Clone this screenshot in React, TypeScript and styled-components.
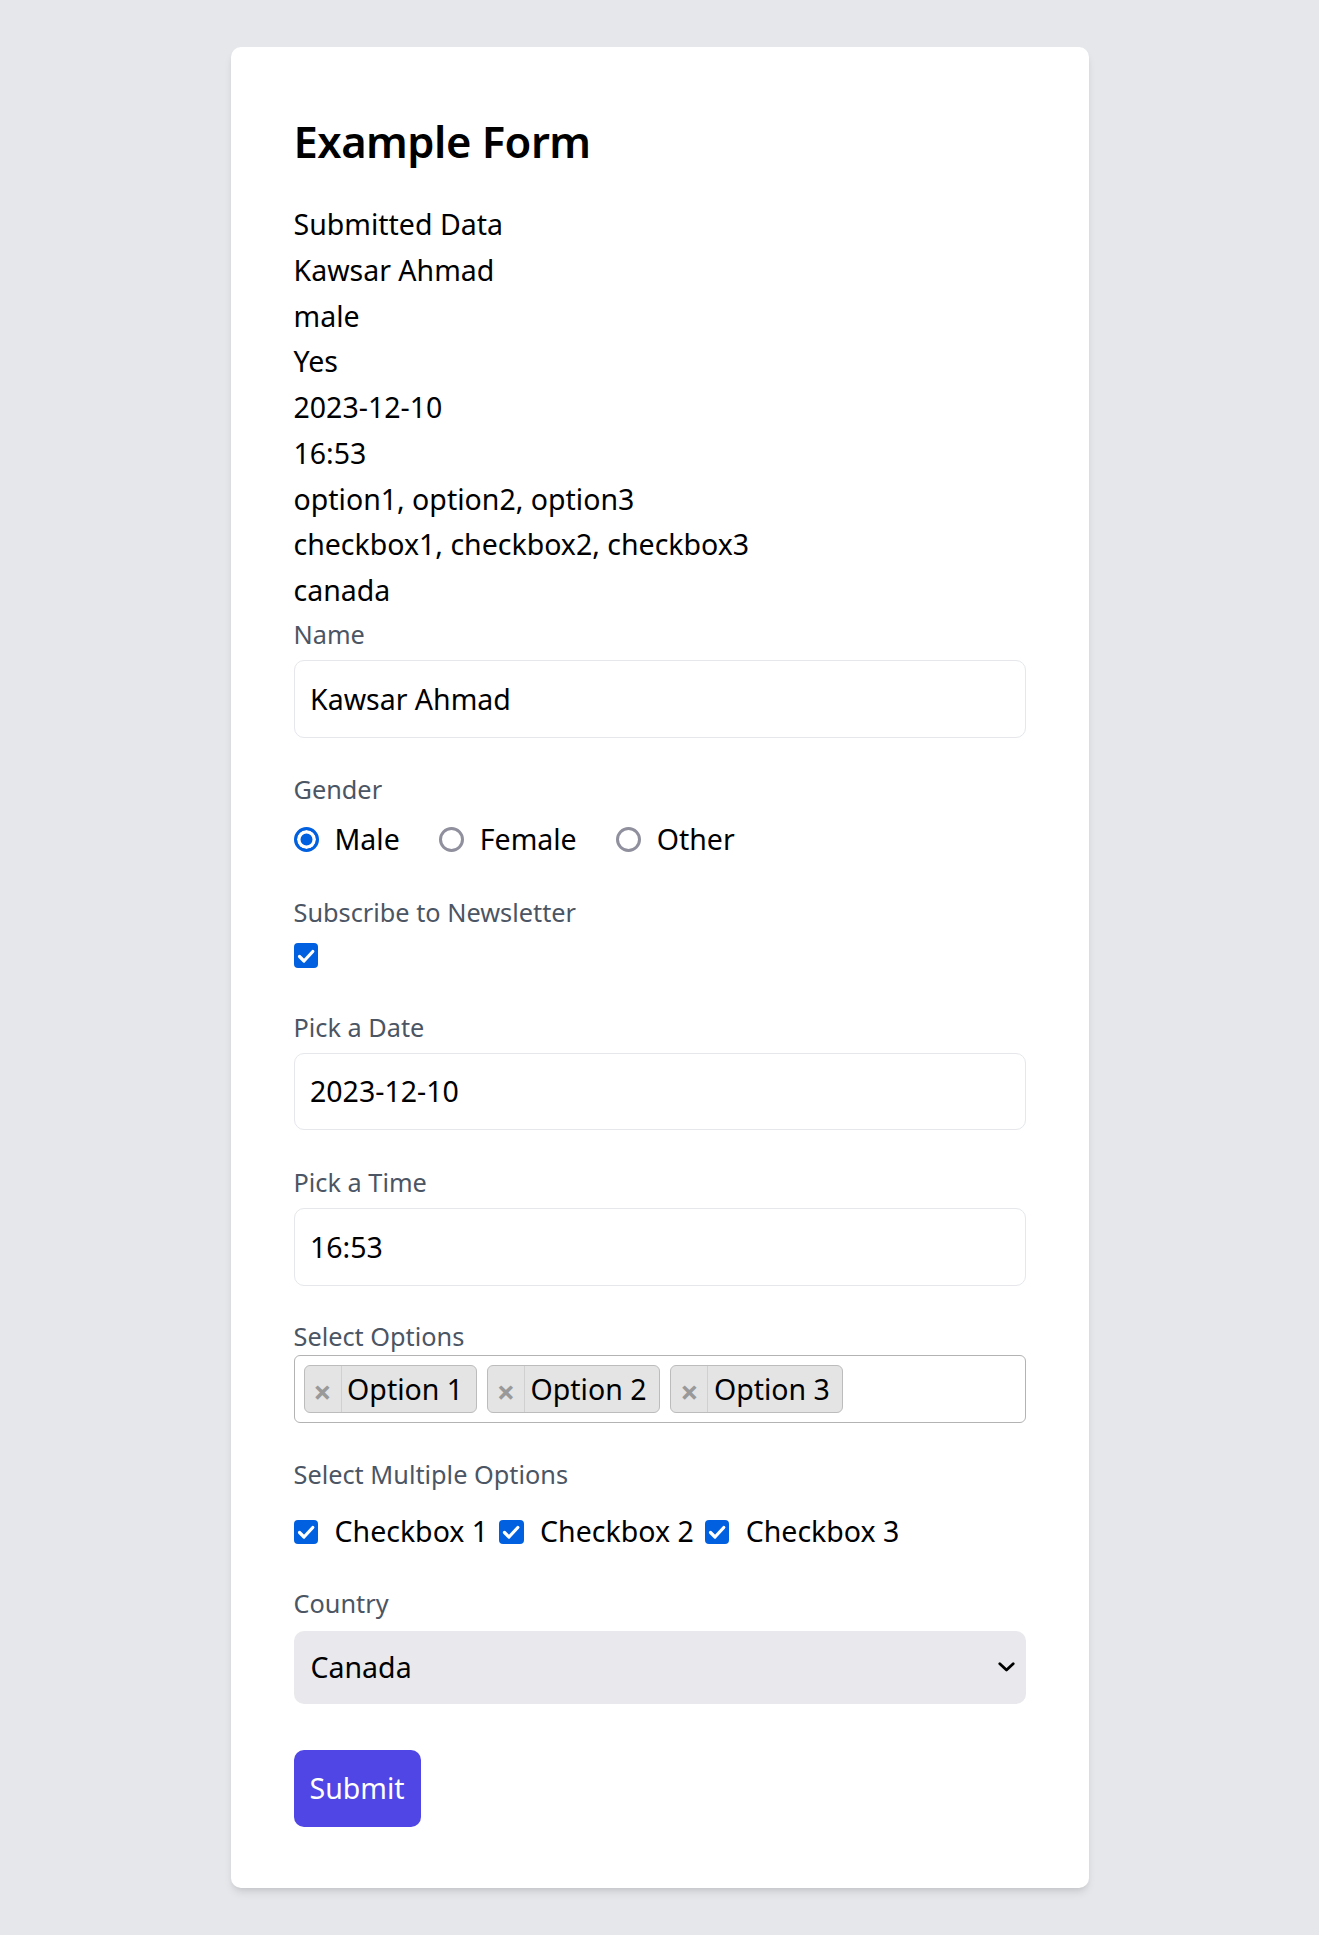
import React from "react"
import styled, { createGlobalStyle, css } from "styled-components"

const GlobalStyle = createGlobalStyle`
  html, body {
    margin: 0;
    padding: 0;
    background: #ffffff;
  }
  body {
    font-family: "Noto Sans", "Open Sans", sans-serif;
    color: #000000;
  }
  *, *::before, *::after {
    box-sizing: border-box;
  }
`

const Page = styled.div`
  width: 1319px;
  padding: 47px 0;
  background: #e5e7eb;
`

const Card = styled.div`
  width: 858px;
  margin: 0 auto;
  padding: 65px 63px 61px;
  background: #ffffff;
  border-radius: 10px;
  box-shadow: 0 6px 10px -2px rgba(0, 0, 0, 0.1), 0 3px 6px -3px rgba(0, 0, 0, 0.1);
`

const Title = styled.h1`
  margin: 0 0 31px;
  font-size: 43.5px;
  line-height: 58px;
  font-weight: 600;
  letter-spacing: -0.5px;
`

const DataList = styled.div`
  margin-bottom: 2px;
`

const DataLine = styled.p`
  margin: 0;
  font-size: 28.5px;
  line-height: 45.75px;
  padding-top: 1px;
  margin-bottom: -1px;
`

const Field = styled.div<{ $after?: number }>`
  margin-bottom: ${(p) => p.$after ?? 32.5}px;
`

const Label = styled.label<{ $space?: number }>`
  display: block;
  margin-bottom: ${(p) => p.$space ?? 6.5}px;
  font-size: 25.3px;
  line-height: 39px;
  color: #4b5563;
`

const TextInput = styled.input`
  display: block;
  width: 100%;
  height: 77.6px;
  padding: 0 15.5px;
  border: 1.5px solid #e5e7eb;
  border-radius: 10px;
  background: #ffffff;
  font-family: inherit;
  font-size: 28.5px;
  color: #000000;
  outline: none;
`

const OptionRow = styled.div`
  display: flex;
  align-items: center;
  height: 45.75px;
`

const RadioOption = styled.label`
  display: flex;
  align-items: center;
  margin-right: 39px;
  font-size: 28.5px;
  line-height: 45.75px;
`

const RadioMark = styled.span<{ $checked?: boolean }>`
  width: 25px;
  height: 25px;
  margin-right: 16px;
  border-radius: 50%;
  border: 3px solid #8f8f9d;
  background: #ffffff;
  ${(p) =>
    p.$checked &&
    css`
      border-color: #0060df;
      background: #0060df;
      box-shadow: inset 0 0 0 3.5px #ffffff;
    `}
`

const CheckMark = styled.span`
  display: flex;
  align-items: center;
  justify-content: center;
  width: 24.5px;
  height: 24.5px;
  border-radius: 4px;
  background: #0060df;
  flex-shrink: 0;
`

const CheckBlock = styled.div`
  height: 37px;
  padding-top: 5px;
`

const CheckOption = styled.label`
  display: flex;
  align-items: center;
  margin-right: 11px;
  font-size: 28.5px;
  line-height: 45.75px;

  ${CheckMark} {
    margin-right: 16.5px;
  }
`

const MultiBox = styled.div`
  display: flex;
  align-items: center;
  gap: 10.3px;
  height: 67.6px;
  padding: 0 9px;
  border: 1.5px solid #b3b3b3;
  border-radius: 6px;
  background: #ffffff;
`

const Chip = styled.span`
  display: flex;
  align-items: stretch;
  height: 47.3px;
  border: 1.3px solid #bcbcbc;
  border-radius: 6px;
  background: #e4e4e4;
`

const ChipRemove = styled.span`
  display: flex;
  align-items: center;
  justify-content: center;
  width: 37px;
  padding-top: 4px;
  border-right: 1.3px solid #d0d0d0;
  color: #999999;
  font-size: 32px;
  font-weight: 700;
`

const ChipText = styled.span`
  display: flex;
  align-items: center;
  padding: 0 12.5px 0 5.6px;
  font-size: 28.5px;
`

const SelectWrap = styled.div`
  position: relative;
`

const Select = styled.select`
  display: block;
  width: 100%;
  height: 73px;
  padding: 0 17px;
  border: none;
  border-radius: 10px;
  background: #e9e9ed;
  font-family: inherit;
  font-size: 28.5px;
  color: #000000;
  appearance: none;
  outline: none;
`

const Chevron = styled.svg`
  position: absolute;
  right: 10.3px;
  top: 50%;
  transform: translateY(-50%);
  pointer-events: none;
`

const SubmitButton = styled.button`
  display: block;
  height: 77px;
  padding: 0 16px;
  border: none;
  border-radius: 10px;
  background: #4f46e5;
  color: #ffffff;
  font-family: inherit;
  font-size: 28.5px;
  cursor: pointer;
`

const Check = () => (
  <CheckMark>
    <svg width="24" height="24" viewBox="0 0 24 24" fill="none">
      <polyline
        points="5.5,12.5 10,17 18.8,7.5"
        stroke="#ffffff"
        strokeWidth="3.2"
        strokeLinecap="round"
        strokeLinejoin="round"
      />
    </svg>
  </CheckMark>
)

const submitted = [
  "Submitted Data",
  "Kawsar Ahmad",
  "male",
  "Yes",
  "2023-12-10",
  "16:53",
  "option1, option2, option3",
  "checkbox1, checkbox2, checkbox3",
  "canada",
]

const genders = [
  { label: "Male", checked: true },
  { label: "Female", checked: false },
  { label: "Other", checked: false },
]

const App = () => {
  return (
    <Page>
      <GlobalStyle />
      <Card>
        <Title>Example Form</Title>
        <DataList>
          {submitted.map((line) => (
            <DataLine key={line}>{line}</DataLine>
          ))}
        </DataList>
        <form onSubmit={(e) => e.preventDefault()}>
          <Field>
            <Label>Name</Label>
            <TextInput type="text" defaultValue="Kawsar Ahmad" />
          </Field>
          <Field $after={30.6}>
            <Label $space={7.3}>Gender</Label>
            <OptionRow>
              {genders.map((g) => (
                <RadioOption key={g.label}>
                  <RadioMark $checked={g.checked} />
                  {g.label}
                </RadioOption>
              ))}
            </OptionRow>
          </Field>
          <Field>
            <Label>Subscribe to Newsletter</Label>
            <CheckBlock>
              <Check />
            </CheckBlock>
          </Field>
          <Field $after={32.4}>
            <Label $space={5.6}>Pick a Date</Label>
            <TextInput type="text" defaultValue="2023-12-10" />
          </Field>
          <Field $after={31.7}>
            <Label>Pick a Time</Label>
            <TextInput type="text" defaultValue="16:53" />
          </Field>
          <Field $after={31.7}>
            <Label $space={-1}>Select Options</Label>
            <MultiBox>
              {["Option 1", "Option 2", "Option 3"].map((o) => (
                <Chip key={o}>
                  <ChipRemove>×</ChipRemove>
                  <ChipText>{o}</ChipText>
                </Chip>
              ))}
            </MultiBox>
          </Field>
          <Field $after={29}>
            <Label $space={15.3}>Select Multiple Options</Label>
            <OptionRow>
              {["Checkbox 1", "Checkbox 2", "Checkbox 3"].map((c) => (
                <CheckOption key={c}>
                  <Check />
                  {c}
                </CheckOption>
              ))}
            </OptionRow>
          </Field>
          <Field $after={46}>
            <Label $space={8.3}>Country</Label>
            <SelectWrap>
              <Select defaultValue="canada">
                <option value="usa">United States</option>
                <option value="canada">Canada</option>
                <option value="uk">United Kingdom</option>
              </Select>
              <Chevron width="17" height="10" viewBox="0 0 17 10" fill="none">
                <polyline
                  points="1.8,1.8 8.5,8 15.2,1.8"
                  stroke="#000000"
                  strokeWidth="2.8"
                  strokeLinecap="round"
                  strokeLinejoin="round"
                />
              </Chevron>
            </SelectWrap>
          </Field>
          <SubmitButton type="submit">Submit</SubmitButton>
        </form>
      </Card>
    </Page>
  )
}

export default App
